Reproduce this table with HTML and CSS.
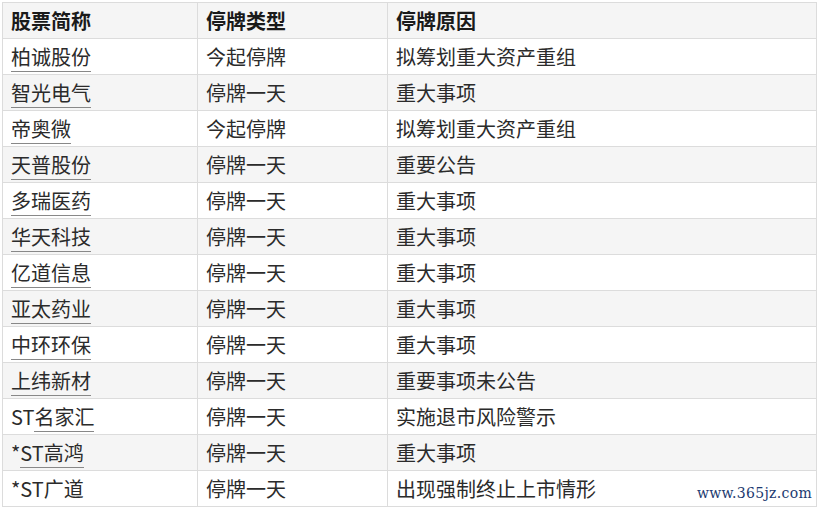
FILE: index.html
```html
<!DOCTYPE html>
<html lang="zh-CN">
<head>
<meta charset="utf-8">
<title>停牌</title>
<link rel="stylesheet" href="styles.css">
</head>
<body>
<div class="wrap">
<table class="tbl">
<colgroup><col class="c1"><col class="c2"><col class="c3"></colgroup>
<thead>
<tr><th>股票简称</th><th>停牌类型</th><th>停牌原因</th></tr>
</thead>
<tbody>
<tr><td><span class="lk">柏诚股份</span></td><td>今起停牌</td><td>拟筹划重大资产重组</td></tr>
<tr><td><span class="lk">智光电气</span></td><td>停牌一天</td><td>重大事项</td></tr>
<tr><td><span class="lk">帝奥微</span></td><td>今起停牌</td><td>拟筹划重大资产重组</td></tr>
<tr><td><span class="lk">天普股份</span></td><td>停牌一天</td><td>重要公告</td></tr>
<tr><td><span class="lk">多瑞医药</span></td><td>停牌一天</td><td>重大事项</td></tr>
<tr><td><span class="lk">华天科技</span></td><td>停牌一天</td><td>重大事项</td></tr>
<tr><td><span class="lk">亿道信息</span></td><td>停牌一天</td><td>重大事项</td></tr>
<tr><td><span class="lk">亚太药业</span></td><td>停牌一天</td><td>重大事项</td></tr>
<tr><td><span class="lk">中环环保</span></td><td>停牌一天</td><td>重大事项</td></tr>
<tr><td><span class="lk">上纬新材</span></td><td>停牌一天</td><td>重要事项未公告</td></tr>
<tr><td>ST<span class="lk">名家汇</span></td><td>停牌一天</td><td>实施退市风险警示</td></tr>
<tr><td>*<span class="lk">ST高鸿</span></td><td>停牌一天</td><td>重大事项</td></tr>
<tr><td>*ST广道</td><td>停牌一天</td><td>出现强制终止上市情形</td></tr>
</tbody>
</table>
<div class="mark">www.365jz.com</div>
</div>
</body>
</html>
```
FILE: styles.css
```css
html, body {
  margin: 0;
  padding: 0;
  background: #fff;
}
body {
  font-family: "Noto Sans CJK SC", "Noto Sans", sans-serif;
  color: #2b2b2b;
}
.wrap {
  position: relative;
  padding: 2px 0 0 2px;
  width: 814px;
}
.tbl {
  border-collapse: collapse;
  width: 814px;
  table-layout: fixed;
  font-size: 20px;
}
.c1 { width: 195px; }
.c2 { width: 190px; }
.c3 { width: 429px; }
.tbl th, .tbl td {
  border: 1px solid #dcdcdc;
  height: 35px;
  padding: 0 8px;
  text-align: left;
  vertical-align: middle;
  line-height: 26px;
  white-space: nowrap;
}
.tbl th {
  background: #f5f5f5;
  font-weight: bold;
  color: #1a1a1a;
}
.tbl tbody tr:nth-child(even) td {
  background: #f5f5f5;
}
.lk {
  border-bottom: 1px solid #888;
}
.mark {
  position: absolute;
  right: 4px;
  bottom: 6px;
  font-family: "DejaVu Serif", "Liberation Serif", serif;
  font-size: 14px;
  color: #1c3a70;
  letter-spacing: 0.3px;
}
```
